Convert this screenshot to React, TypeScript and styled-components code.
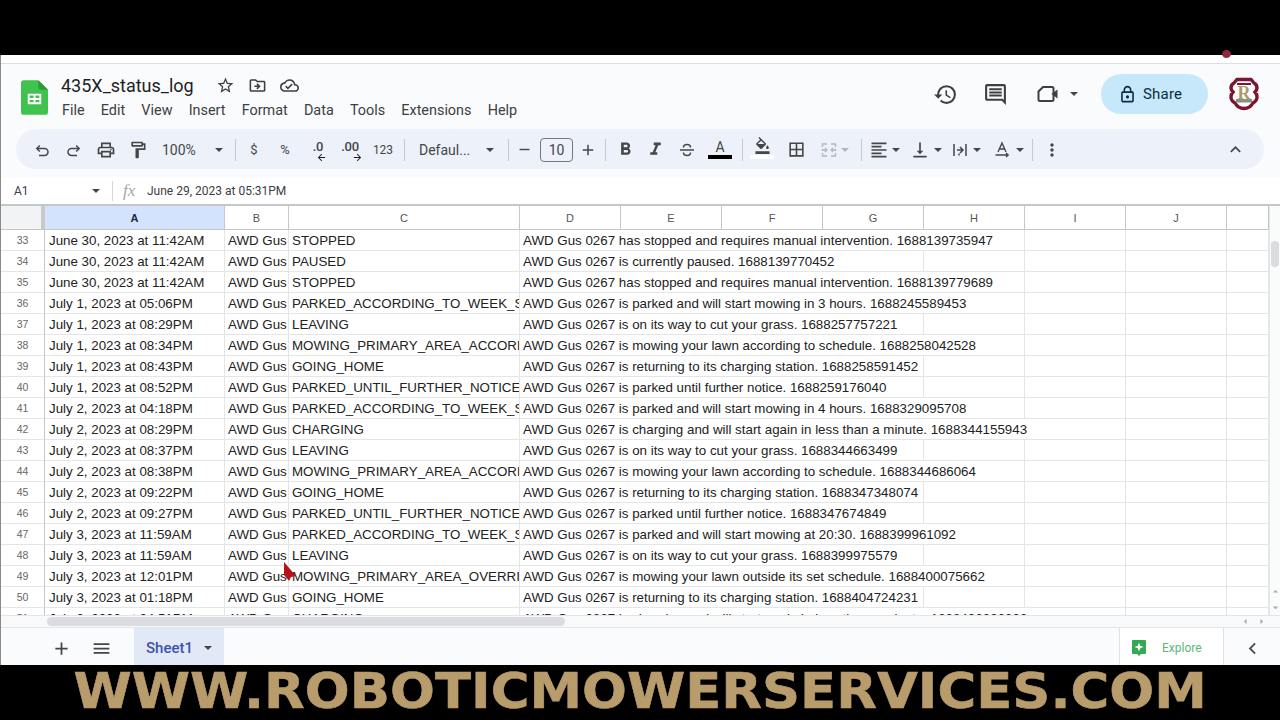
import styled, { createGlobalStyle } from "styled-components";
import {
  MdOutlinePrint,
  MdOutlineFormatPaint,
  MdFormatBold,
  MdFormatItalic,
  MdFormatColorFill,
  MdBorderAll,
  MdFormatAlignLeft,
  MdVerticalAlignBottom,
  MdMoreVert,
  MdKeyboardArrowUp,
  MdHistory,
  MdOutlineInsertComment,
  MdOutlineLock,
  MdStarBorder,
  MdOutlineDriveFileMove,
  MdOutlineCloudDone,
  MdAdd,
  MdRemove,
  MdMenu,
  MdChevronLeft,
  MdArrowBack,
  MdArrowForward,
  MdArrowDropUp,
  MdArrowDropDown,
  MdArrowLeft,
  MdArrowRight,
} from "react-icons/md";

const GlobalStyle = createGlobalStyle`
  html, body {
    margin: 0;
    padding: 0;
    background: #000;
  }
  * {
    box-sizing: border-box;
  }
`;

const Page = styled.div`
  position: relative;
  width: 1280px;
  height: 720px;
  overflow: hidden;
  display: flex;
  flex-direction: column;
  background: #000;
  font-family: Roboto, "Liberation Sans", sans-serif;
`;

const TopBlack = styled.div`
  height: 55px;
  flex: none;
`;

const Sheet = styled.div`
  height: 610px;
  flex: none;
  display: flex;
  flex-direction: column;
  background: #fff;
  border-left: 1px solid #8a8a8a;
`;

const BrowserStrip = styled.div`
  position: relative;
  height: 9px;
  flex: none;
  background: #fff;
  border-bottom: 1px solid #dcdfe2;
`;

const ProfileDot = styled.div`
  position: absolute;
  right: 49px;
  top: -5px;
  width: 9px;
  height: 8px;
  border-radius: 50%;
  background: #8c2a3c;
`;

const Header = styled.header`
  height: 113px;
  flex: none;
  background: #f9fbfd;
  padding: 0 15px;
  display: flex;
  flex-direction: column;
`;

const TitleRow = styled.div`
  height: 65px;
  flex: none;
  display: flex;
  align-items: flex-start;
`;

const Logo = styled.svg`
  width: 27px;
  height: 35px;
  margin: 16px 0 0 5px;
  flex: none;
`;

const TitleBlock = styled.div`
  margin-left: 13px;
  padding-top: 8px;
`;

const TitleLine = styled.div`
  display: flex;
  align-items: center;
  height: 26px;
  color: #3c4043;
`;

const DocTitle = styled.span`
  font-size: 18px;
  color: #1f1f1f;
  margin-right: 21px;
  width: 134px;
  white-space: nowrap;
`;

const TitleIcon = styled.span`
  width: 32px;
  display: flex;
  font-size: 19px;
  color: #3c4043;
`;

const MenuLine = styled.nav`
  display: flex;
  gap: 16.2px;
  margin-top: 3px;
  padding-left: 1px;
  font-size: 14.4px;
  line-height: 20px;
  color: #3c4043;
`;

const HeaderRight = styled.div`
  margin-left: auto;
  display: flex;
  align-items: center;
  height: 40px;
  margin-top: 10px;
  color: #3c4043;
`;

const HeadIcon = styled.span<{ $w: number; $after?: number }>`
  width: ${(p) => p.$w}px;
  margin-right: ${(p) => p.$after ?? 0}px;
  display: flex;
  align-items: center;
  justify-content: center;
  font-size: 25px;
`;

const ShareButton = styled.div`
  width: 107px;
  height: 40px;
  margin-left: 23px;
  padding-left: 17px;
  border-radius: 20px;
  background: #c7e7fa;
  color: #0b2c44;
  display: flex;
  align-items: center;
  gap: 6px;
  font-size: 15px;
  letter-spacing: 0.2px;
`;

const Crest = styled.svg`
  width: 30px;
  height: 34px;
  margin: 0 6px 0 21px;
`;

const Toolbar = styled.div`
  height: 40px;
  width: 1248px;
  flex: none;
  border-radius: 20px;
  background: #edf2fa;
  display: flex;
  align-items: center;
  padding: 1px 16px 0 10px;
  color: #444746;
`;

const ToolBtn = styled.div<{ $w: number; $left?: number; $fade?: boolean }>`
  width: ${(p) => p.$w}px;
  height: 28px;
  flex: none;
  display: flex;
  align-items: center;
  justify-content: ${(p) => (p.$left !== undefined ? "flex-start" : "center")};
  padding-left: ${(p) => p.$left ?? 0}px;
  font-size: 14px;
  color: ${(p) => (p.$fade ? "#b4b8bb" : "#444746")};
  white-space: nowrap;
`;

const CollapseBtn = styled(ToolBtn)`
  margin-left: auto;
`;

const ToolText = styled.span<{ $size?: number; $w?: number }>`
  font-size: ${(p) => p.$size ?? 14}px;
  width: ${(p) => (p.$w ? `${p.$w}px` : "auto")};
  flex: none;
`;

const DecimalMark = styled.span`
  position: relative;
  font-size: 13px;
  font-weight: 500;
  margin-top: -6px;
  letter-spacing: -0.3px;
`;

const DecimalArrow = styled.span`
  position: absolute;
  right: -4px;
  bottom: -9px;
  display: flex;
  font-size: 11px;
  color: #1f1f1f;
`;

const Caret = styled.i<{ $fade?: boolean; $mx?: number }>`
  width: 0;
  height: 0;
  flex: none;
  margin-left: ${(p) => p.$mx ?? 0}px;
  border-left: 4px solid transparent;
  border-right: 4px solid transparent;
  border-top: 4px solid ${(p) => (p.$fade ? "#b4b8bb" : "#444746")};
`;

const Sep = styled.div`
  width: 1px;
  height: 22px;
  flex: none;
  margin: 0 5px;
  background: #c7c9cc;
`;

const SizeBox = styled.div`
  width: 33px;
  height: 24px;
  flex: none;
  margin: 0 3px 0 6px;
  border: 1px solid #747775;
  border-radius: 4px;
  display: flex;
  align-items: center;
  justify-content: center;
  font-size: 14px;
  color: #444746;
`;

const ColorA = styled.div<{ $bar: string }>`
  display: flex;
  flex-direction: column;
  align-items: center;
  width: 24px;
  font-size: 14px;
  line-height: 15px;
  &::after {
    content: "";
    width: 24px;
    height: 4px;
    background: ${(p) => p.$bar};
  }
`;

const FillStack = styled.div`
  display: flex;
  flex-direction: column;
  align-items: center;
  font-size: 17px;
  margin-top: -4px;
  &::after {
    content: "";
    width: 24px;
    height: 4px;
    margin-top: 1px;
    background: #fff;
  }
`;

const FormulaBar = styled.div`
  height: 29px;
  flex: none;
  background: #fff;
  display: flex;
  align-items: center;
  border-bottom: 2px solid #c4c7c8;
  font-size: 12px;
  color: #3c4043;
`;

const CellRef = styled.div`
  width: 99px;
  display: flex;
  align-items: center;
  justify-content: space-between;
  padding: 0 0 0 13px;
`;

const FormulaSep = styled.div`
  width: 1px;
  height: 20px;
  margin-left: 12px;
  background: #d5d7d9;
`;

const FxMark = styled.span`
  font-family: "Liberation Serif", serif;
  font-style: italic;
  font-size: 17px;
  color: #a4a7aa;
  width: 34px;
  padding-left: 10px;
`;

const GridWrap = styled.div`
  flex: 1;
  min-height: 0;
  display: flex;
`;

const GridArea = styled.div`
  flex: 1;
  min-width: 0;
  overflow: hidden;
`;

const Cols = "44px 180px 64px 231px 101px 101px 101px 101px 101px 101px 101px 1fr";

const HeadRow = styled.div`
  display: grid;
  grid-template-columns: ${Cols};
  height: 24px;
  border-bottom: 1px solid #c4c7c8;
`;

const Corner = styled.div`
  background: #f1f3f4;
  border-right: 4px solid #c7c9cb;
`;

const ColHead = styled.div<{ $on?: boolean }>`
  display: flex;
  align-items: center;
  justify-content: center;
  font-family: "Liberation Sans", Arial, sans-serif;
  font-size: 11px;
  font-weight: ${(p) => (p.$on ? 700 : 400)};
  color: ${(p) => (p.$on ? "#1f2a44" : "#555")};
  background: ${(p) => (p.$on ? "#d3e3fd" : "#fff")};
  border-right: 1px solid #c4c7c8;
`;

const Row = styled.div`
  display: grid;
  grid-template-columns: ${Cols};
  height: 21px;
`;

const RowNum = styled.div`
  display: flex;
  align-items: center;
  justify-content: center;
  font-family: "Liberation Sans", Arial, sans-serif;
  font-size: 10.5px;
  color: #666;
  border-right: 1px solid #c4c7c8;
  border-bottom: 1px solid #e3e5e6;
`;

const Cell = styled.div<{ $span?: number; $pad?: number }>`
  grid-column: span ${(p) => p.$span ?? 1};
  padding: 1px 3px 0 ${(p) => p.$pad ?? 3}px;
  overflow: hidden;
  white-space: nowrap;
  font-family: "Liberation Sans", Arial, sans-serif;
  font-size: 13.33px;
  line-height: 19px;
  color: #222;
  border-right: 1px solid #e3e5e6;
  border-bottom: 1px solid #e3e5e6;
`;

const VScroll = styled.div`
  width: 11px;
  flex: none;
  display: flex;
  flex-direction: column;
  align-items: center;
  background: #fafbfb;
  border-left: 1px solid #e3e5e6;
  color: #a8acaf;
  font-size: 13px;
  padding-bottom: 1px;
`;

const VThumb = styled.div`
  width: 8px;
  height: 26px;
  margin-top: 35px;
  border-radius: 4px;
  background: #dadce0;
`;

const VArrows = styled.div`
  margin-top: auto;
  display: flex;
  flex-direction: column;
  gap: 3px;
`;

const HScroll = styled.div`
  height: 13px;
  flex: none;
  display: flex;
  align-items: center;
  background: #f8f9fa;
  border-top: 1px solid #e3e5e6;
  border-bottom: 1px solid #e3e5e6;
  color: #a8acaf;
  font-size: 13px;
  padding-left: 46px;
`;

const HThumb = styled.div`
  width: 518px;
  height: 9px;
  border-radius: 5px;
  background: #dadce0;
`;

const HArrows = styled.div`
  margin-left: auto;
  margin-right: 12px;
  display: flex;
  gap: 3px;
`;

const TabBar = styled.div`
  height: 37px;
  flex: none;
  background: #f9fbfd;
  display: flex;
  align-items: stretch;
  padding-left: 40px;
  color: #444746;
`;

const TabIcon = styled.div`
  width: 40px;
  padding-top: 3px;
  display: flex;
  align-items: center;
  justify-content: center;
  font-size: 21px;
`;

const ActiveTab = styled.div`
  width: 90px;
  margin-left: 13px;
  padding: 3px 0 0 12px;
  background: #e1e9f7;
  color: #3f51ae;
  font-size: 15px;
  font-weight: 500;
  display: flex;
  align-items: center;
  gap: 11px;
`;

const ExploreBtn = styled.div`
  width: 105px;
  margin-left: auto;
  padding: 3px 0 0 12px;
  background: #fff;
  border-left: 1px solid #e0e2e4;
  border-right: 1px solid #e0e2e4;
  display: flex;
  align-items: center;
  gap: 16px;
  font-size: 12px;
  color: #5cb77a;
`;

const PanelToggle = styled.div`
  width: 56px;
  padding-top: 3px;
  display: flex;
  align-items: center;
  justify-content: center;
  font-size: 23px;
  color: #4b4f52;
`;

const BottomBlack = styled.div`
  flex: 1;
  display: flex;
  align-items: center;
  justify-content: center;
  overflow: hidden;
`;

const Brand = styled.div`
  font-family: "DejaVu Sans", "Liberation Sans", sans-serif;
  font-weight: 700;
  font-size: 50px;
  line-height: 50px;
  white-space: nowrap;
  color: #b89c6c;
  -webkit-text-stroke: 0.6px #b89c6c;
  transform: scaleX(1.057);
  margin-top: -3px;
`;

const PointerMark = styled.svg`
  position: absolute;
  left: 282px;
  top: 561px;
  width: 16px;
  height: 21px;
`;

const STOP = "has stopped and requires manual intervention.";
const WAY = "is on its way to cut your grass.";
const MOW = "is mowing your lawn according to schedule.";
const HOME = "is returning to its charging station.";
const PARKED = "is parked until further notice.";
const CHARGE = "is charging and will start again in less than a minute.";
const WEEK = "PARKED_ACCORDING_TO_WEEK_SCHEDULE";
const UNTIL = "PARKED_UNTIL_FURTHER_NOTICE";
const PRIMARY = "MOWING_PRIMARY_AREA_ACCORDING";

const rows: [number, string, string, string, number][] = [
  [33, "June 30, 2023 at 11:42AM", "STOPPED", `${STOP} 1688139735947`, 5],
  [34, "June 30, 2023 at 11:42AM", "PAUSED", "is currently paused. 1688139770452", 4],
  [35, "June 30, 2023 at 11:42AM", "STOPPED", `${STOP} 1688139779689`, 5],
  [36, "July 1, 2023 at 05:06PM", WEEK, "is parked and will start mowing in 3 hours. 1688245589453", 5],
  [37, "July 1, 2023 at 08:29PM", "LEAVING", `${WAY} 1688257757221`, 4],
  [38, "July 1, 2023 at 08:34PM", PRIMARY, `${MOW} 1688258042528`, 5],
  [39, "July 1, 2023 at 08:43PM", "GOING_HOME", `${HOME} 1688258591452`, 4],
  [40, "July 1, 2023 at 08:52PM", UNTIL, `${PARKED} 1688259176040`, 4],
  [41, "July 2, 2023 at 04:18PM", WEEK, "is parked and will start mowing in 4 hours. 1688329095708", 5],
  [42, "July 2, 2023 at 08:29PM", "CHARGING", `${CHARGE} 1688344155943`, 6],
  [43, "July 2, 2023 at 08:37PM", "LEAVING", `${WAY} 1688344663499`, 4],
  [44, "July 2, 2023 at 08:38PM", PRIMARY, `${MOW} 1688344686064`, 5],
  [45, "July 2, 2023 at 09:22PM", "GOING_HOME", `${HOME} 1688347348074`, 4],
  [46, "July 2, 2023 at 09:27PM", UNTIL, `${PARKED} 1688347674849`, 4],
  [47, "July 3, 2023 at 11:59AM", WEEK, "is parked and will start mowing at 20:30. 1688399961092", 5],
  [48, "July 3, 2023 at 11:59AM", "LEAVING", `${WAY} 1688399975579`, 4],
  [49, "July 3, 2023 at 12:01PM", "MOWING_PRIMARY_AREA_OVERRIDE", "is mowing your lawn outside its set schedule. 1688400075662", 5],
  [50, "July 3, 2023 at 01:18PM", "GOING_HOME", `${HOME} 1688404724231`, 4],
  [51, "July 3, 2023 at 04:51PM", "CHARGING", `${CHARGE} 1688406666666`, 6],
];

const columns = ["A", "B", "C", "D", "E", "F", "G", "H", "I", "J", ""];
const menus = ["File", "Edit", "View", "Insert", "Format", "Data", "Tools", "Extensions", "Help"];

function UndoIcon() {
  return (
    <svg width="18" height="18" viewBox="0 0 18 18" fill="none" stroke="#444746" strokeWidth="1.5">
      <path d="M4 7.5h7.5a3.5 3.5 0 0 1 0 7H6" />
      <path d="M6.8 4.5L3.8 7.5l3 3" />
    </svg>
  );
}

function RedoIcon() {
  return (
    <svg width="18" height="18" viewBox="0 0 18 18" fill="none" stroke="#444746" strokeWidth="1.5">
      <path d="M14 7.5H6.5a3.5 3.5 0 0 0 0 7H12" />
      <path d="M11.2 4.5l3 3-3 3" />
    </svg>
  );
}

function StrikeIcon() {
  return (
    <svg width="18" height="18" viewBox="0 0 18 18" fill="none" stroke="#444746" strokeWidth="1.5">
      <path d="M5.5 6.5c0-2 1.6-3 3.5-3s3.5 1 3.5 3" />
      <path d="M5.5 11.5c0 2 1.6 3 3.5 3s3.5-1 3.5-3" />
      <path d="M2 9h14" />
    </svg>
  );
}

function MergeIcon() {
  return (
    <svg width="18" height="18" viewBox="0 0 18 18" fill="none" stroke="#b4b8bb" strokeWidth="1.4">
      <path d="M7 3H2.5v3M2.5 8v2M2.5 12v3H7M11 3h4.5v3M15.5 8v2M15.5 12v3H11" />
      <path d="M2 9h4M5 7l2 2-2 2M16 9h-4M13 7l-2 2 2 2" />
    </svg>
  );
}

function WrapIcon() {
  return (
    <svg width="18" height="18" viewBox="0 0 18 18" fill="none" stroke="#444746" strokeWidth="1.5">
      <path d="M3 3v12M15 3v12" />
      <path d="M6 9h5.5M9 6l3 3-3 3M8 12.5v2" />
    </svg>
  );
}

function RotateIcon() {
  return (
    <svg width="18" height="18" viewBox="0 0 18 18" fill="none" stroke="#444746" strokeWidth="1.4">
      <path d="M5 11l4-9 4 9M6.5 8h5" />
      <path d="M2.5 14h12.5M13 12l2.2 2-2.2 2" />
    </svg>
  );
}

function MeetIcon() {
  return (
    <svg width="24" height="24" viewBox="0 0 24 24">
      <path d="M7 5h9a1.5 1.5 0 0 1 1.5 1.5v11A1.5 1.5 0 0 1 16 19H4a1.5 1.5 0 0 1-1.5-1.5V9.5z" fill="none" stroke="#3c4043" strokeWidth="2" />
      <path d="M15.5 12l6-4.5v9z" fill="#3c4043" />
    </svg>
  );
}

export default function App() {
  return (
    <Page>
      <GlobalStyle />
      <TopBlack />
      <Sheet>
        <BrowserStrip>
          <ProfileDot />
        </BrowserStrip>
        <Header>
          <TitleRow>
            <Logo viewBox="0 0 28 36">
              <path d="M3 0h15l10 10v23a3 3 0 0 1-3 3H3a3 3 0 0 1-3-3V3a3 3 0 0 1 3-3z" fill="#3fc24e" />
              <path d="M18 0l10 10H20a2 2 0 0 1-2-2z" fill="#2b9c3b" />
              <path d="M7 14h14v11H7z M9 16v2.5h4V16z M15 16v2.5h4V16z M9 20.5V23h4v-2.5z M15 20.5V23h4v-2.5z" fill="#fff" fillRule="evenodd" />
            </Logo>
            <TitleBlock>
              <TitleLine>
                <DocTitle>435X_status_log</DocTitle>
                <TitleIcon><MdStarBorder /></TitleIcon>
                <TitleIcon><MdOutlineDriveFileMove /></TitleIcon>
                <TitleIcon><MdOutlineCloudDone /></TitleIcon>
              </TitleLine>
              <MenuLine>
                {menus.map((m) => (
                  <span key={m}>{m}</span>
                ))}
              </MenuLine>
            </TitleBlock>
            <HeaderRight>
              <HeadIcon $w={50}><MdHistory /></HeadIcon>
              <HeadIcon $w={50} $after={6}><MdOutlineInsertComment /></HeadIcon>
              <HeadIcon $w={44}><MeetIcon /></HeadIcon>
              <Caret />
              <ShareButton>
                <MdOutlineLock size={19} />
                Share
              </ShareButton>
              <Crest viewBox="0 0 30 34">
                <path d="M8 2.5h14l3 3.5c2 1 3 3 3 5 0 2-1 3-2 4 1 1 2 3 2 5 0 3-2 5-4 6-2 3.500-6 5.500-9 5.500s-7-2-9-5.500c-2-1-4-3-4-6 0-2 1-4 2-5-1-1-2-2-2-4 0-2 1-4 3-5z" fill="#fff" stroke="#7d1530" strokeWidth="3.4" />
                <path d="M8 7h14" stroke="#7d1530" strokeWidth="2" />
                <text x="15" y="22" textAnchor="middle" fontFamily="Liberation Serif, serif" fontWeight="700" fontSize="18" fill="#a99a6c">R</text>
                <rect x="7" y="22" width="16" height="3.500" fill="#8d8d80" />
              </Crest>
            </HeaderRight>
          </TitleRow>
          <Toolbar>
            <ToolBtn $w={32}><UndoIcon /></ToolBtn>
            <ToolBtn $w={31}><RedoIcon /></ToolBtn>
            <ToolBtn $w={33}><MdOutlinePrint size={20} /></ToolBtn>
            <ToolBtn $w={31}><MdOutlineFormatPaint size={20} /></ToolBtn>
            <ToolBtn $w={77} $left={9}>
              <ToolText $w={38}>100%</ToolText>
              <Caret $mx={15} />
            </ToolBtn>
            <Sep />
            <ToolBtn $w={26}><ToolText $size={13}>$</ToolText></ToolBtn>
            <ToolBtn $w={36}><ToolText $size={13}>%</ToolText></ToolBtn>
            <ToolBtn $w={30}>
              <DecimalMark>.0<DecimalArrow><MdArrowBack /></DecimalArrow></DecimalMark>
            </ToolBtn>
            <ToolBtn $w={34}>
              <DecimalMark>.00<DecimalArrow><MdArrowForward /></DecimalArrow></DecimalMark>
            </ToolBtn>
            <ToolBtn $w={32}><ToolText $size={12}>123</ToolText></ToolBtn>
            <Sep />
            <ToolBtn $w={93} $left={9}>
              <ToolText $w={61}>Defaul...</ToolText>
              <Caret $mx={6} />
            </ToolBtn>
            <Sep />
            <ToolBtn $w={20}><MdRemove size={17} /></ToolBtn>
            <SizeBox>10</SizeBox>
            <ToolBtn $w={24}><MdAdd size={18} /></ToolBtn>
            <Sep />
            <ToolBtn $w={28}><MdFormatBold size={21} /></ToolBtn>
            <ToolBtn $w={32}><MdFormatItalic size={21} /></ToolBtn>
            <ToolBtn $w={32}><StrikeIcon /></ToolBtn>
            <ToolBtn $w={34}><ColorA $bar="#000">A</ColorA></ToolBtn>
            <Sep />
            <ToolBtn $w={28}><FillStack><MdFormatColorFill /></FillStack></ToolBtn>
            <ToolBtn $w={40}><MdBorderAll size={19} /></ToolBtn>
            <ToolBtn $w={40} $left={4} $fade>
              <MergeIcon />
              <Caret $fade $mx={3} />
            </ToolBtn>
            <Sep />
            <ToolBtn $w={37} $left={2}>
              <MdFormatAlignLeft size={20} />
              <Caret $mx={3} />
            </ToolBtn>
            <ToolBtn $w={42} $left={6}>
              <MdVerticalAlignBottom size={20} />
              <Caret $mx={4} />
            </ToolBtn>
            <ToolBtn $w={40} $left={5}>
              <WrapIcon />
              <Caret $mx={4} />
            </ToolBtn>
            <ToolBtn $w={41} $left={7}>
              <RotateIcon />
              <Caret $mx={5} />
            </ToolBtn>
            <Sep />
            <ToolBtn $w={28}><MdMoreVert size={20} /></ToolBtn>
            <CollapseBtn $w={26}><MdKeyboardArrowUp size={21} /></CollapseBtn>
          </Toolbar>
        </Header>
        <FormulaBar>
          <CellRef>
            A1
            <Caret />
          </CellRef>
          <FormulaSep />
          <FxMark>fx</FxMark>
          June 29, 2023 at 05:31PM
        </FormulaBar>
        <GridWrap>
          <GridArea>
            <HeadRow>
              <Corner />
              {columns.map((c) => (
                <ColHead key={c} $on={c === "A"}>{c}</ColHead>
              ))}
            </HeadRow>
            {rows.map(([n, date, status, message, span]) => (
              <Row key={n}>
                <RowNum>{n}</RowNum>
                <Cell $pad={4}>{date}</Cell>
                <Cell>AWD Gus 0267</Cell>
                <Cell>{status}</Cell>
                <Cell $span={span}>AWD Gus 0267 {message}</Cell>
                {Array.from({ length: 8 - span }, (_, i) => (
                  <Cell key={i} />
                ))}
              </Row>
            ))}
          </GridArea>
          <VScroll>
            <VThumb />
            <VArrows>
              <MdArrowDropUp />
              <MdArrowDropDown />
            </VArrows>
          </VScroll>
        </GridWrap>
        <HScroll>
          <HThumb />
          <HArrows>
            <MdArrowLeft />
            <MdArrowRight />
          </HArrows>
        </HScroll>
        <TabBar>
          <TabIcon><MdAdd /></TabIcon>
          <TabIcon><MdMenu /></TabIcon>
          <ActiveTab>
            Sheet1
            <Caret />
          </ActiveTab>
          <ExploreBtn>
            <svg width="14" height="16" viewBox="0 0 14 16">
              <path d="M1 0h12a1 1 0 0 1 1 1v12a1 1 0 0 1-1 1H9l-2 2-2-2H1a1 1 0 0 1-1-1V1a1 1 0 0 1 1-1z" fill="#34a853" />
              <path d="M7 2.5l1.2 3.3 3.3 1.2-3.3 1.2L7 11.5 5.8 8.2 2.5 7l3.3-1.2z" fill="#fff" />
            </svg>
            Explore
          </ExploreBtn>
          <PanelToggle><MdChevronLeft /></PanelToggle>
        </TabBar>
      </Sheet>
      <BottomBlack>
        <Brand>WWW.ROBOTICMOWERSERVICES.COM</Brand>
      </BottomBlack>
      <PointerMark viewBox="0 0 16 21">
        <path d="M2 1l12 14-5 1-2 4-5-6z" fill="#b3151b" />
      </PointerMark>
    </Page>
  );
}
